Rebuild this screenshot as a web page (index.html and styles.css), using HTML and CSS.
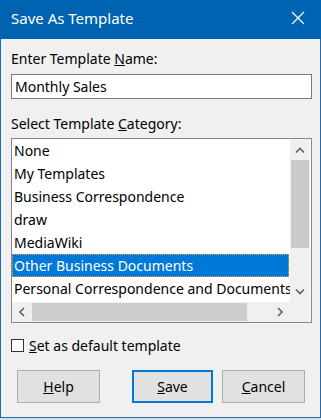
FILE: index.html
```html
<!DOCTYPE html>
<html>
<head>
    <title>Save As Template</title>
    <link rel="stylesheet" href="styles.css">
</head>
<body>
    <div class="window">
        <div class="titlebar">
            <span class="title">Save As Template</span>
            <span class="close">
                <svg width="14" height="14" viewBox="0 0 14 14"><path d="M1 1L13 13M13 1L1 13" stroke="#fff" stroke-width="1.2" fill="none"/></svg>
            </span>
        </div>

        <div class="content">
            <div class="label first">Enter Template <u>N</u>ame:</div>
            <div class="textbox">Monthly Sales</div>

            <div class="label second">Select Template <u>C</u>ategory:</div>
            <div class="listbox">
                <div class="items">
                    <div class="item">None</div>
                    <div class="item">My Templates</div>
                    <div class="item">Business Correspondence</div>
                    <div class="item">draw</div>
                    <div class="item">MediaWiki</div>
                    <div class="item selected">Other Business Documents</div>
                    <div class="item">Personal Correspondence and Documents</div>
                </div>
                <div class="vscroll">
                    <div class="sbtn">
                        <svg width="10" height="6" viewBox="0 0 10 6"><path d="M1 5.5L5 1.5L9 5.5" stroke="#606060" stroke-width="1.6" fill="none"/></svg>
                    </div>
                    <div class="vtrack"><div class="vthumb"></div></div>
                    <div class="sbtn">
                        <svg width="10" height="6" viewBox="0 0 10 6"><path d="M1 0.5L5 4.5L9 0.5" stroke="#606060" stroke-width="1.6" fill="none"/></svg>
                    </div>
                </div>
                <div class="hscroll">
                    <div class="sbtn">
                        <svg width="6" height="10" viewBox="0 0 6 10"><path d="M5 1L1 5L5 9" stroke="#606060" stroke-width="1.6" fill="none"/></svg>
                    </div>
                    <div class="htrack"><div class="hthumb"></div></div>
                    <div class="sbtn">
                        <svg width="6" height="10" viewBox="0 0 6 10"><path d="M1 1L5 5L1 9" stroke="#606060" stroke-width="1.6" fill="none"/></svg>
                    </div>
                </div>
                <div class="corner"></div>
            </div>

            <div class="check-row">
                <span class="checkbox"></span>
                <span><u>S</u>et as default template</span>
            </div>

            <div class="buttons">
                <div class="btn help"><u>H</u>elp</div>
                <div class="btn save default"><u>S</u>ave</div>
                <div class="btn cancel"><u>C</u>ancel</div>
            </div>
        </div>
    </div>
</body>
</html>
```

FILE: styles.css
```css
body {
    margin: 0;
    background: #dcdcdc;
    font-family: "Noto Sans", "Open Sans", sans-serif;
    font-size: 14px;
    color: #000;
}

.window {
    box-sizing: border-box;
    width: 321px;
    height: 418px;
    border: 1px solid #1c6cb4;
    border-top: none;
    background: #f0f0f0;
}

.titlebar {
    height: 39px;
    background: #0063b1;
    display: flex;
    align-items: center;
    justify-content: space-between;
    padding: 0 16px 0 11px;
    margin: 0 -1px;
}
    .titlebar .title {
        color: #fff;
        font-size: 15px;
        padding-bottom: 3px;
    }
    .titlebar .close {
        display: flex;
        padding-bottom: 3px;
    }

.content {
    padding: 10px 8px 0 10px;
    display: flex;
    flex-direction: column;
}

.label {
    height: 20px;
    line-height: 20px;
}
    .label.first {
        margin-bottom: 5px;
    }
    .label.second {
        margin-top: 15px;
        margin-bottom: 4px;
    }

.textbox {
    box-sizing: border-box;
    height: 25px;
    border: 1px solid #7a7a7a;
    background: #fff;
    padding-left: 3px;
    line-height: 23px;
}

.listbox {
    box-sizing: border-box;
    height: 185px;
    border: 1px solid #828790;
    background: #fff;
    display: grid;
    grid-template-columns: 278px 20px;
    grid-template-rows: 163px 20px;
}

.items {
    overflow: hidden;
}
    .items .item {
        height: 23px;
        line-height: 23px;
        padding-left: 2px;
        white-space: nowrap;
    }
    .items .selected {
        box-sizing: border-box;
        background: #0078d7;
        color: #fff;
        border: 1px dotted #f0a040;
        line-height: 21px;
        padding-left: 1px;
        margin-right: 1px;
    }

.vscroll {
    background: #f0f0f0;
    display: flex;
    flex-direction: column;
}
    .vscroll .sbtn {
        height: 21px;
        display: flex;
        align-items: center;
        justify-content: center;
    }
    .vtrack {
        flex: 1;
    }
    .vthumb {
        margin: 0 1px;
        height: 88px;
        background: repeating-linear-gradient(90deg, #cdcdcd 0 2px, #c6c6c6 2px 3px);
    }

.hscroll {
    background: #f0f0f0;
    display: flex;
}
    .hscroll .sbtn {
        width: 20px;
        display: flex;
        align-items: center;
        justify-content: center;
    }
    .htrack {
        flex: 1;
    }
    .hthumb {
        margin-top: 1px;
        width: 215px;
        height: 18px;
        background: #cdcdcd;
    }

.corner {
    background: #f0f0f0;
}

.check-row {
    margin-top: 12px;
    height: 20px;
    display: flex;
    align-items: center;
}
    .checkbox {
        box-sizing: border-box;
        width: 13px;
        height: 13px;
        border: 1px solid #333;
        background: #fff;
        margin-right: 5px;
    }

.buttons {
    margin-top: 15px;
    display: flex;
}
    .btn {
        box-sizing: border-box;
        height: 33px;
        border: 1px solid #adadad;
        background: #e1e1e1;
        display: flex;
        align-items: center;
        justify-content: center;
        padding-bottom: 1px;
    }
    .btn.help {
        width: 83px;
        margin-left: 6px;
    }
    .btn.save {
        width: 81px;
        margin-left: 32px;
        border: 2px solid #0078d7;
    }
    .btn.cancel {
        width: 83px;
        margin-left: 9px;
    }
```
